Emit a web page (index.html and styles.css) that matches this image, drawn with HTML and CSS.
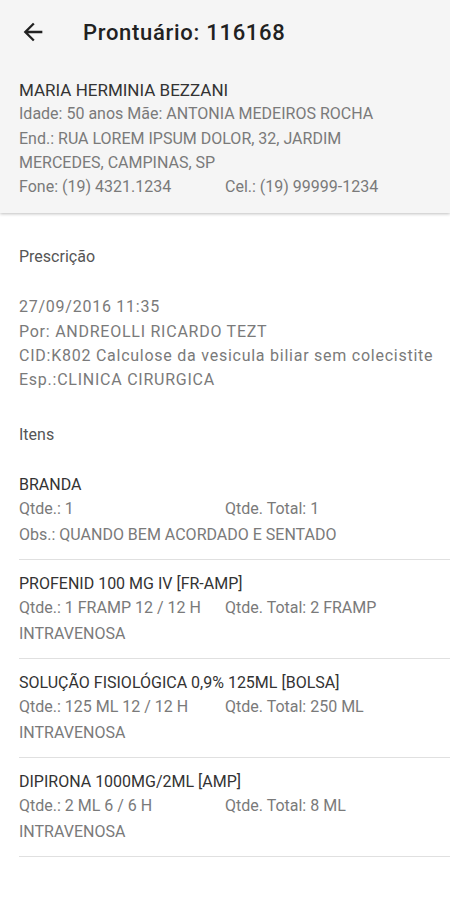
FILE: index.html
```html
<!DOCTYPE html>
<html>
<head>
  <title>Prontuário</title>
  <link rel="stylesheet" href="styles.css">
</head>
<body>
  <div class="header">
    <div class="toolbar">
      <svg class="back" viewBox="0 0 24 24" width="28" height="28">
        <path d="M20 11H7.83l5.59-5.59L12 4l-8 8 8 8 1.41-1.41L7.83 13H20v-2z"/>
      </svg>
      <h1>Prontuário: 116168</h1>
    </div>
    <div class="patient">
      <div class="name">MARIA HERMINIA BEZZANI</div>
      <div class="line">Idade: 50 anos Mãe: ANTONIA MEDEIROS ROCHA</div>
      <div class="line">End.: RUA LOREM IPSUM DOLOR, 32, JARDIM MERCEDES, CAMPINAS, SP</div>
      <div class="line cols">
        <span>Fone: (19) 4321.1234</span>
        <span>Cel.: (19) 99999-1234</span>
      </div>
    </div>
  </div>

  <div class="content">
    <div class="section-title">Prescrição</div>
    <div class="prescription">
      <div>27/09/2016 11:35</div>
      <div>Por: ANDREOLLI RICARDO TEZT</div>
      <div>CID:K802 Calculose da vesicula biliar sem colecistite</div>
      <div>Esp.:CLINICA CIRURGICA</div>
    </div>
    <div class="section-title items-title">Itens</div>

    <ul class="items">
      <li>
        <div class="item-name">BRANDA</div>
        <div class="cols"><span>Qtde.: 1</span><span>Qtde. Total: 1</span></div>
        <div class="extra">Obs.: QUANDO BEM ACORDADO E SENTADO</div>
      </li>
      <li>
        <div class="item-name">PROFENID 100 MG IV [FR-AMP]</div>
        <div class="cols"><span>Qtde.: 1 FRAMP 12 / 12 H</span><span>Qtde. Total: 2 FRAMP</span></div>
        <div class="extra">INTRAVENOSA</div>
      </li>
      <li>
        <div class="item-name">SOLUÇÃO FISIOLÓGICA 0,9% 125ML [BOLSA]</div>
        <div class="cols"><span>Qtde.: 125 ML 12 / 12 H</span><span>Qtde. Total: 250 ML</span></div>
        <div class="extra">INTRAVENOSA</div>
      </li>
      <li>
        <div class="item-name">DIPIRONA 1000MG/2ML [AMP]</div>
        <div class="cols"><span>Qtde.: 2 ML 6 / 6 H</span><span>Qtde. Total: 8 ML</span></div>
        <div class="extra">INTRAVENOSA</div>
      </li>
    </ul>
  </div>
</body>
</html>
```

FILE: styles.css
```css
body {
  font-family: Roboto, "Liberation Sans", sans-serif;
  margin: 0;
  background-color: #fff;
  color: #7a7a7a;
  font-size: 16px;
}

.header {
  background-color: #f5f5f5;
  box-shadow: 0 1px 3px rgba(0, 0, 0, 0.25);
  padding-bottom: 14px;
}

.toolbar {
  display: flex;
  align-items: center;
  height: 64px;
  padding-left: 19px;
}

.back {
  fill: #212121;
  margin-right: 36px;
}

h1 {
  margin: 0;
  font-size: 22px;
  font-weight: 500;
  letter-spacing: 0.7px;
  color: #212121;
}

.patient {
  padding: 14px 30px 0 19px;
  line-height: 24.3px;
}

.name {
  font-size: 17px;
  color: #333;
}

.cols {
  display: grid;
  grid-template-columns: 206px 1fr;
}

.content {
  padding: 32px 0 0 19px;
}

.section-title {
  color: #555;
  line-height: 24px;
  margin-bottom: 26px;
}

.items-title {
  margin-bottom: 14px;
}

.prescription {
  letter-spacing: 0.75px;
  line-height: 24.3px;
  margin-bottom: 30px;
}

.items {
  list-style: none;
  margin: 0;
  padding: 0;
}

.items li {
  border-bottom: 1px solid #e0e0e0;
  padding: 12px 0;
  line-height: 24px;
}

.item-name {
  color: #333;
}

.extra {
  margin-top: 2px;
}
```
